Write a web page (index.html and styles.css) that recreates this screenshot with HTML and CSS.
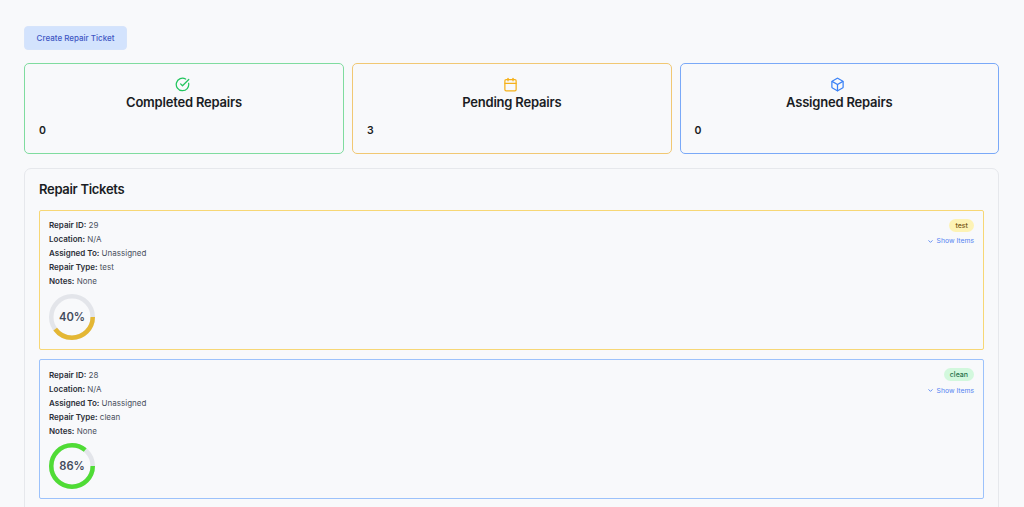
FILE: index.html
```html
<!DOCTYPE html>
<html lang="en">
<head>
<meta charset="utf-8">
<title>Repairs</title>
<link rel="stylesheet" href="styles.css">
</head>
<body>
<main class="page">
  <button class="create-btn" type="button">Create Repair Ticket</button>
  <section class="stats">
    <article class="stat stat-green">
      <div class="stat-head">
        <svg class="stat-icon icon-green" viewBox="0 0 24 24" fill="none" stroke="currentColor" stroke-width="2" stroke-linecap="round" stroke-linejoin="round"><path d="M21.8 10A10 10 0 1 1 17 3.3"/><path d="m9 11 3 3L22 4"/></svg>
        <h2 class="stat-title">Completed Repairs</h2>
      </div>
      <p class="stat-value">0</p>
    </article>
    <article class="stat stat-amber">
      <div class="stat-head">
        <svg class="stat-icon icon-amber" viewBox="0 0 24 24" fill="none" stroke="currentColor" stroke-width="2" stroke-linecap="round" stroke-linejoin="round"><path d="M8 2v4"/><path d="M16 2v4"/><rect x="3" y="4" width="18" height="18" rx="2"/><path d="M3 10h18"/></svg>
        <h2 class="stat-title">Pending Repairs</h2>
      </div>
      <p class="stat-value">3</p>
    </article>
    <article class="stat stat-blue">
      <div class="stat-head">
        <svg class="stat-icon icon-blue" viewBox="0 0 24 24" fill="none" stroke="currentColor" stroke-width="2" stroke-linecap="round" stroke-linejoin="round"><path d="M21 8a2 2 0 0 0-1-1.73l-7-4a2 2 0 0 0-2 0l-7 4A2 2 0 0 0 3 8v8a2 2 0 0 0 1 1.73l7 4a2 2 0 0 0 2 0l7-4A2 2 0 0 0 21 16Z"/><path d="m3.3 7 8.7 5 8.7-5"/><path d="M12 22V12"/></svg>
        <h2 class="stat-title">Assigned Repairs</h2>
      </div>
      <p class="stat-value">0</p>
    </article>
  </section>
  <section class="panel">
    <h1 class="panel-title">Repair Tickets</h1>
    <article class="ticket ticket-amber">
      <div class="ticket-info">
        <p class="line"><b>Repair ID:</b> 29</p>
        <p class="line"><b>Location:</b> N/A</p>
        <p class="line"><b>Assigned To:</b> Unassigned</p>
        <p class="line"><b>Repair Type:</b> test</p>
        <p class="line"><b>Notes:</b> None</p>
        <div class="ring">
          <svg viewBox="0 0 46 46"><circle class="ring-track" cx="23" cy="23" r="20.75"/><circle class="ring-fill fill-amber" cx="23" cy="23" r="20.75" pathLength="100" stroke-dasharray="40 100"/></svg>
          <span class="ring-label">40%</span>
        </div>
      </div>
      <div class="ticket-side">
        <span class="badge badge-amber">test</span>
        <a class="toggle"><svg class="chev" viewBox="0 0 24 24" fill="none" stroke="currentColor" stroke-width="3" stroke-linecap="round" stroke-linejoin="round"><path d="m6 9 6 6 6-6"/></svg>Show Items</a>
      </div>
    </article>
    <article class="ticket ticket-blue">
      <div class="ticket-info">
        <p class="line"><b>Repair ID:</b> 28</p>
        <p class="line"><b>Location:</b> N/A</p>
        <p class="line"><b>Assigned To:</b> Unassigned</p>
        <p class="line"><b>Repair Type:</b> clean</p>
        <p class="line"><b>Notes:</b> None</p>
        <div class="ring">
          <svg viewBox="0 0 46 46"><circle class="ring-track" cx="23" cy="23" r="20.75"/><circle class="ring-fill fill-green" cx="23" cy="23" r="20.75" pathLength="100" stroke-dasharray="86 100"/></svg>
          <span class="ring-label">86%</span>
        </div>
      </div>
      <div class="ticket-side">
        <span class="badge badge-green">clean</span>
        <a class="toggle"><svg class="chev" viewBox="0 0 24 24" fill="none" stroke="currentColor" stroke-width="3" stroke-linecap="round" stroke-linejoin="round"><path d="m6 9 6 6 6-6"/></svg>Show Items</a>
      </div>
    </article>
  </section>
</main>
</body>
</html>
```
FILE: styles.css
```css
* { box-sizing: border-box; }
html, body { margin: 0; height: 100%; overflow: hidden; }
body { background: #f8f9fb; font-family: Inter, "Liberation Sans", sans-serif; color: #1a1d23; }
p, h1, h2 { margin: 0; }
.page { padding: 26px 25px 0 24px; display: flex; flex-direction: column; align-items: stretch; }
.create-btn { align-self: flex-start; width: 103px; height: 24px; padding: 0; border: 1px solid #d6e4fb; border-radius: 4px; background: #d3e3fd; color: #3f57c4; font: 500 8px Inter, sans-serif; }
.stats { display: grid; grid-template-columns: 320px 1fr 1fr; gap: 8px; margin-top: 13px; }
.stat { height: 91px; border: 1px solid; border-radius: 5px; padding: 13px 14px 0; }
.stat-green { border-color: #7fdc9f; }
.stat-amber { border-color: #f1c873; }
.stat-blue { border-color: #7aa9f8; }
.stat-head { display: flex; flex-direction: column; align-items: center; }
.stat-icon { width: 15px; height: 15px; display: block; margin-right: 3px; }
.icon-green { color: #22c55e; }
.icon-amber { color: #f5b11a; }
.icon-blue { color: #3b82f6; }
.stat-title { font-size: 13px; font-weight: 600; line-height: 20px; letter-spacing: -0.2px; }
.stat-value { font-size: 10.5px; font-weight: 600; line-height: 14px; margin-top: 12px; }
.panel { margin-top: 14px; border: 1px solid #e6e8ec; border-radius: 7px; padding: 11px 14px 14px; height: 400px; }
.panel-title { font-size: 13px; font-weight: 600; line-height: 18px; letter-spacing: -0.3px; }
.ticket { height: 140px; border: 1px solid; border-radius: 2px; padding: 7.2px 9px; display: flex; justify-content: space-between; margin-top: 9.4px; }
.panel-title + .ticket { margin-top: 12px; }
.ticket-amber { border-color: #f7d775; }
.ticket-blue { border-color: #9cc2fb; }
.line { font-size: 8px; line-height: 14px; color: #4a5160; }
.line b { font-weight: 600; color: #2b2f38; }
.ring { position: relative; width: 46px; height: 46px; margin-top: 5.8px; }
.ring svg { display: block; width: 46px; height: 46px; }
.ring-track, .ring-fill { fill: none; stroke-width: 4.5; }
.ring-track { stroke: #e3e5ea; }
.fill-amber { stroke: #e4b734; }
.fill-green { stroke: #4fdc35; }
.ring-label { position: absolute; inset: 0; display: flex; align-items: center; justify-content: center; font-size: 11.2px; font-weight: 600; color: #434b5c; }
.ticket-side { display: flex; flex-direction: column; align-items: flex-end; padding-top: 0.8px; }
.badge { height: 13px; padding: 0 6px; border-radius: 7px; font-size: 7px; font-weight: 500; line-height: 13px; }
.badge-amber { background: #fdf3b5; color: #7a5a1a; }
.badge-green { background: #d2f8dd; color: #25704a; }
.toggle { display: flex; align-items: center; gap: 3px; margin-top: 3.5px; font-size: 6.8px; line-height: 12px; color: #5585f2; }
.chev { width: 7px; height: 7px; display: block; }
```
